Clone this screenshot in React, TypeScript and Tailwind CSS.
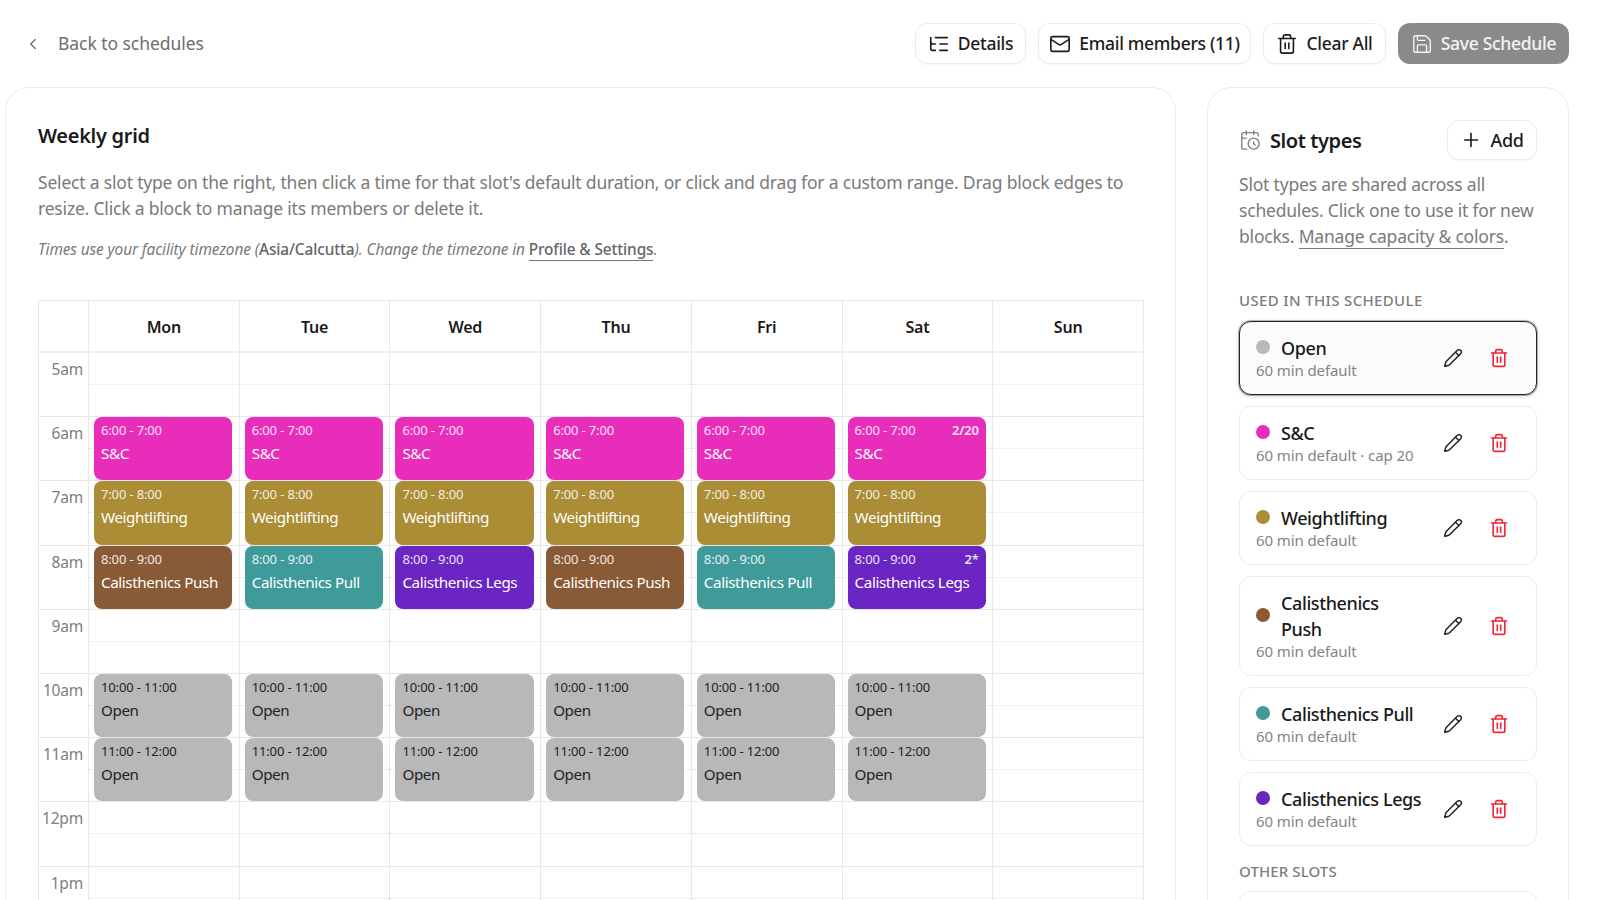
import { CalendarClock, ChevronLeft, ListTree, Mail, Pencil, Plus, Save, Trash2 } from 'lucide-react'

type Block = { time: string; label: string; color: string; dark?: boolean; badge?: string }

const SC = { label: 'S&C', color: 'bg-[#e92dbb]' }
const WL = { label: 'Weightlifting', color: 'bg-[#aa8d35]' }
const PUSH = { label: 'Calisthenics Push', color: 'bg-[#885a35]' }
const PULL = { label: 'Calisthenics Pull', color: 'bg-[#3f9a9a]' }
const LEGS = { label: 'Calisthenics Legs', color: 'bg-[#6b25c3]' }
const OPEN = { label: 'Open', color: 'bg-[#b8b8b8]', dark: true }

const HOURS = ['5am', '6am', '7am', '8am', '9am', '10am', '11am', '12pm', '1pm']
const DAYS = ['Mon', 'Tue', 'Wed', 'Thu', 'Fri', 'Sat', 'Sun']

const EIGHT = [PUSH, PULL, LEGS, PUSH, PULL, LEGS]

function blockFor(day: number, hour: string): Block | null {
  if (day > 5) return null
  switch (hour) {
    case '6am':
      return { ...SC, time: '6:00 - 7:00', badge: day === 5 ? '2/20' : undefined }
    case '7am':
      return { ...WL, time: '7:00 - 8:00' }
    case '8am':
      return { ...EIGHT[day], time: '8:00 - 9:00', badge: day === 5 ? '2*' : undefined }
    case '10am':
      return { ...OPEN, time: '10:00 - 11:00' }
    case '11am':
      return { ...OPEN, time: '11:00 - 12:00' }
    default:
      return null
  }
}

const SLOTS = [
  { name: 'Open', sub: '60 min default', dot: 'bg-[#b8b8b8]', selected: true },
  { name: 'S&C', sub: '60 min default · cap 20', dot: 'bg-[#e92dbb]' },
  { name: 'Weightlifting', sub: '60 min default', dot: 'bg-[#aa8d35]' },
  { name: 'Calisthenics\nPush', sub: '60 min default', dot: 'bg-[#885a35]' },
  { name: 'Calisthenics Pull', sub: '60 min default', dot: 'bg-[#3f9a9a]' },
  { name: 'Calisthenics Legs', sub: '60 min default', dot: 'bg-[#6b25c3]' },
]

function HeaderButton({ icon, label, width }: { icon: React.ReactNode; label: string; width: string }) {
  return (
    <button className={`flex h-[41px] items-center justify-center gap-2 rounded-xl border border-[#ececec] bg-white text-[17.5px] font-medium tracking-[-0.3px] text-[#1c1c1c] shadow-[0_1px_2px_rgba(0,0,0,0.04)] ${width}`}>
      {icon}
      {label}
    </button>
  )
}

function SlotCard({ name, sub, dot, selected }: { name: string; sub: string; dot: string; selected?: boolean }) {
  return (
    <div
      className={
        selected
          ? 'flex items-center rounded-xl border border-[#222] bg-[#fbfbfb] pb-[14px] pl-4 pr-[27px] pt-[13px] shadow-[0_0_0_1px_rgba(0,0,0,0.25),0_1px_4px_rgba(0,0,0,0.2)]'
          : 'flex items-center rounded-xl border border-[#ececec] bg-white pb-[14px] pl-4 pr-[27px] pt-[13px]'
      }
    >
      <div className="min-w-0 flex-1">
        <div className="flex items-center gap-[11px]">
          <span className={`-mt-[3px] h-[14px] w-[14px] shrink-0 rounded-full ${dot}`} />
          <span className="whitespace-pre-line text-[18px] font-medium leading-[26px] tracking-[-0.4px] text-[#1a1a1a]">{name}</span>
        </div>
        <div className="-mt-px text-[15px] leading-5 tracking-[-0.1px] text-[#858585]">{sub}</div>
      </div>
      <button className="text-[#222]">
        <Pencil size={20} strokeWidth={1.75} />
      </button>
      <button className="ml-[26px] text-[#ee2b3b]">
        <Trash2 size={20} strokeWidth={2} />
      </button>
    </div>
  )
}

function GridBlock({ b }: { b: Block }) {
  return (
    <div className={`absolute bottom-0 left-[5px] right-[6.5px] top-0 z-10 rounded-lg px-[7px] pt-[4px] ${b.color} ${b.dark ? 'text-[#222]' : 'text-white'}`}>
      <div className={`flex justify-between text-[13px] leading-[19px] tracking-[-0.15px] ${b.dark ? '' : 'text-white/85'}`}>
        <span>{b.time}</span>
        {b.badge && <span className="font-semibold">{b.badge}</span>}
      </div>
      <div className="mt-[2px] whitespace-nowrap text-[15.2px] leading-[22px] tracking-[-0.4px]">{b.label}</div>
    </div>
  )
}

function WeeklyGrid() {
  return (
    <div className="mt-[39px] w-[1106px] border-l border-r border-t border-[#e8e8e8]">
      <div className="grid grid-cols-[49px_repeat(7,1fr)] border-b-2 border-[#eeeeee]">
        <div className="h-[50px]" />
        {DAYS.map(d => (
          <div key={d} className="flex h-[50px] items-center justify-center border-l border-[#e8e8e8] pt-[2px] text-[16px] font-semibold tracking-[-0.2px] text-[#1a1a1a]">
            {d}
          </div>
        ))}
      </div>
      {HOURS.map(h => (
        <div key={h} className="grid grid-cols-[49px_repeat(7,1fr)]">
          <div className="h-[64.2px] border-b border-[#e8e8e8] pr-[5px] pt-[4px] text-right text-[15.5px] leading-6 tracking-[-0.2px] text-[#7d7d7d]">{h}</div>
          {DAYS.map((d, i) => {
            const b = blockFor(i, h)
            return (
              <div key={d} className="relative h-[64.2px] border-b border-l border-[#e8e8e8]">
                <div className="absolute left-0 right-0 top-[31px] border-t border-dotted border-[#e2e2e2]" />
                {b && <GridBlock b={b} />}
              </div>
            )
          })}
        </div>
      ))}
    </div>
  )
}

export default function App() {
  return (
    <div className="h-[900px] overflow-hidden bg-white font-['Noto_Sans',sans-serif]">
      {/* Top bar */}
      <div className="flex h-[87px] items-start justify-between pl-[24px] pr-[31px] pt-[23px]">
        <div className="flex h-[41px] items-center text-[#6e6e6e]">
          <ChevronLeft size={18} strokeWidth={1.75} />
          <span className="ml-[16px] text-[17.5px] tracking-[-0.05px]">Back to schedules</span>
        </div>
        <div className="flex gap-3">
          <HeaderButton icon={<ListTree size={22} strokeWidth={1.75} />} label="Details" width="w-[111px]" />
          <HeaderButton icon={<Mail size={22} strokeWidth={1.75} />} label="Email members (11)" width="w-[213px]" />
          <HeaderButton icon={<Trash2 size={22} strokeWidth={1.75} />} label="Clear All" width="w-[123px]" />
          <button className="flex h-[41px] w-[171px] items-center justify-center gap-2 rounded-xl bg-[#8a8a8a] text-[17.5px] font-medium tracking-[-0.3px] text-white/90">
            <Save size={22} strokeWidth={1.5} />
            Save Schedule
          </button>
        </div>
      </div>

      <div className="flex items-start gap-[31px] pl-[5px]">
        {/* Weekly grid card */}
        <div className="h-[900px] w-[1171px] shrink-0 rounded-[24px] border border-[#ececec] bg-white pl-8 pt-[34px]">
          <h2 className="text-[20px] font-semibold leading-7 tracking-[-0.3px] text-[#1a1a1a]">Weekly grid</h2>
          <p className="mt-[19px] text-[17.5px] leading-[26px] tracking-[-0.19px] text-[#7a7a7a]">
            Select a slot type on the right, then click a time for that slot's default duration, or click and drag for a custom range. Drag block edges to
            <br />
            resize. Click a block to manage its members or delete it.
          </p>
          <p className="mt-[18px] text-[15.4px] italic leading-[22px] tracking-[-0.12px] text-[#7a7a7a]">
            Times use your facility timezone (<span className="font-medium not-italic text-[#666]">Asia/Calcutta</span>). Change the timezone in{' '}
            <span className="border-b border-[#777] font-medium not-italic text-[#666]">Profile &amp; Settings</span>.
          </p>
          <WeeklyGrid />
        </div>

        {/* Slot types card */}
        <div className="h-[900px] w-[362px] shrink-0 rounded-[24px] border border-[#ececec] bg-white pl-[31px] pr-[31px] pt-8">
          <div className="flex h-10 items-center">
            <CalendarClock size={22} strokeWidth={1.5} className="text-[#808080]" />
            <span className="ml-[9px] mt-[2px] flex-1 text-[20px] font-semibold tracking-[-0.4px] text-[#1a1a1a]">Slot types</span>
            <button className="flex h-10 w-[90px] items-center justify-center gap-2 rounded-xl border border-[#ececec] text-[18px] font-medium tracking-[-0.3px] text-[#1c1c1c] shadow-[0_1px_2px_rgba(0,0,0,0.04)]">
              <Plus size={22} strokeWidth={1.75} />
              Add
            </button>
          </div>
          <p className="mt-[11px] text-[17.5px] leading-[26px] tracking-[-0.2px] text-[#7a7a7a]">
            Slot types are shared across all
            <br />
            schedules. Click one to use it for new
            <br />
            blocks. <span className="border-b border-[#777]">Manage capacity &amp; colors</span>.
          </p>
          <div className="mt-[41px] text-[15px] font-medium uppercase leading-5 tracking-[0.35px] text-[#7d7d7d]">Used in this schedule</div>
          <div className="mt-[11px] flex flex-col gap-[11px]">
            {SLOTS.map(s => (
              <SlotCard key={s.name} {...s} />
            ))}
          </div>
          <div className="mt-[15px] text-[15px] font-medium uppercase leading-5 tracking-[0.1px] text-[#7d7d7d]">Other slots</div>
          <div className="mt-[10px] h-[74px] rounded-xl border border-[#ececec]" />
        </div>
      </div>
    </div>
  )
}
